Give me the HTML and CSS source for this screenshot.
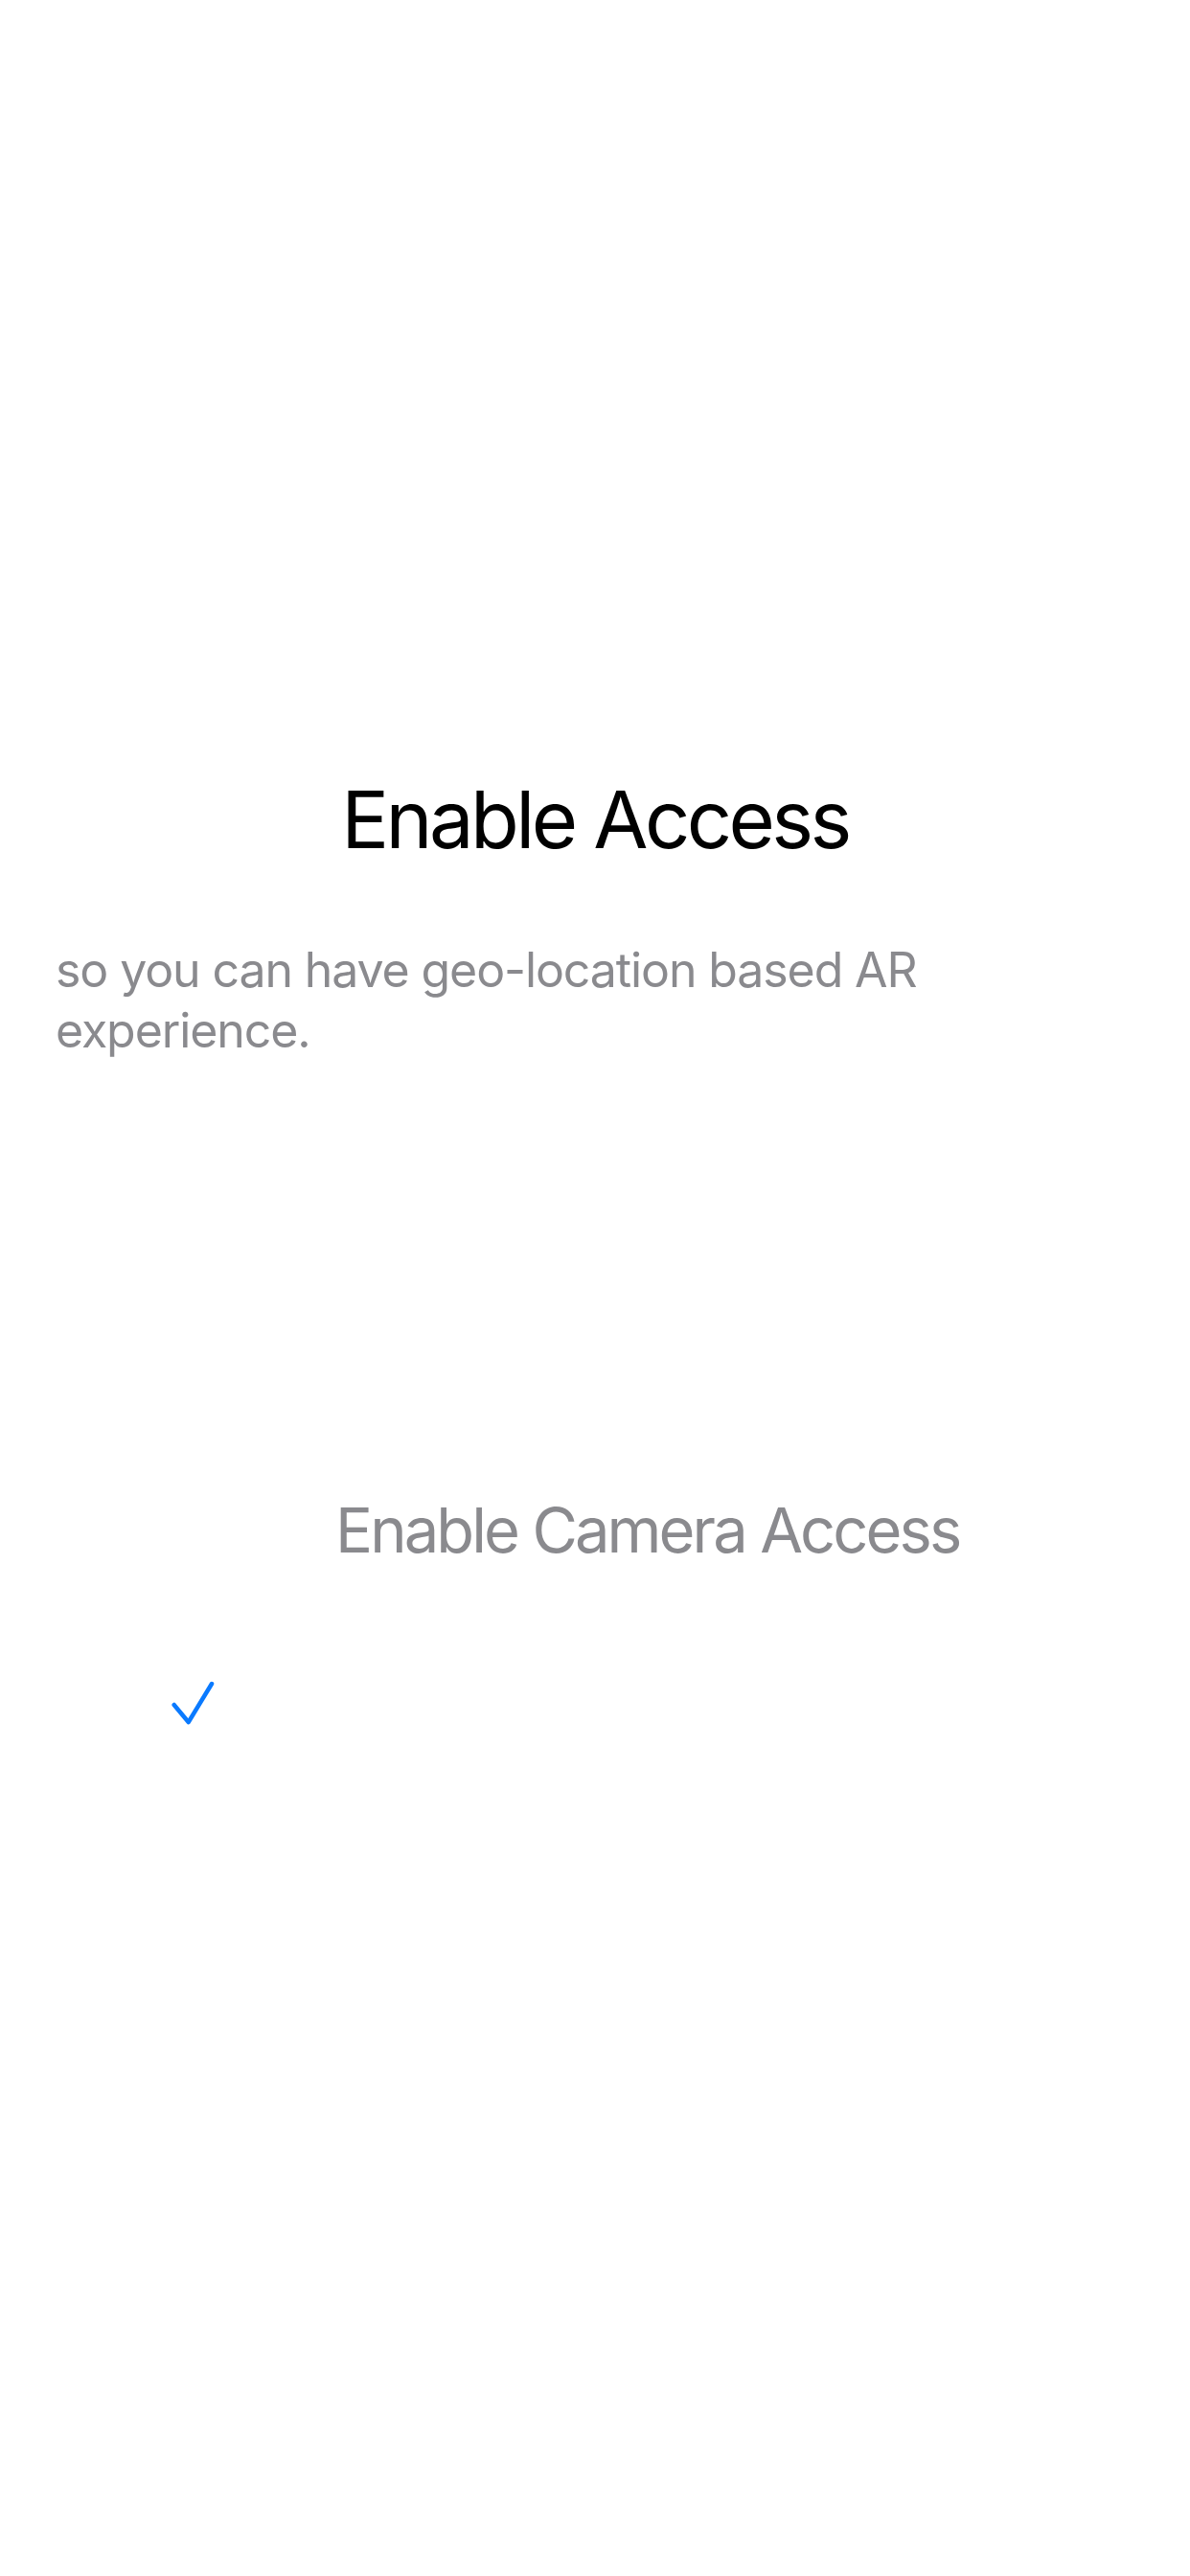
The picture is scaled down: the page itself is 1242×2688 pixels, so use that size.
FILE: index.html
```html
<!DOCTYPE html>
<html lang="en">
<head>
<meta charset="utf-8">
<title>Enable Access</title>
<link rel="stylesheet" href="styles.css">
</head>
<body>
<main class="screen">
  <h1 class="title">Enable Access</h1>
  <p class="subtitle">so you can have geo-location based AR experience.</p>
  <div class="action">Enable Camera Access</div>
  <div class="check-row">
    <svg class="check" width="50" height="50" viewBox="0 0 50 50" aria-hidden="true">
      <path d="M5.7 27 L20.7 45 L45 5" fill="none" stroke="#0A7AFF" stroke-width="4.5" stroke-linecap="round" stroke-linejoin="round"/>
    </svg>
  </div>
</main>
</body>
</html>
```

FILE: styles.css
```css
html, body {
  margin: 0;
  padding: 0;
  background: #ffffff;
}

body {
  width: 1242px;
  height: 2688px;
  overflow: hidden;
  font-family: "Inter", "Liberation Sans", sans-serif;
}

.screen {
  display: flex;
  flex-direction: column;
  padding-top: 805px;
}

.title {
  margin: 0;
  font-size: 83px;
  line-height: 100px;
  font-weight: 400;
  color: #000000;
  text-align: center;
  letter-spacing: -3.6px;
}

.subtitle {
  margin: 76px 0 0;
  padding: 0 58px;
  font-size: 50px;
  line-height: 63px;
  font-weight: 400;
  color: #8a8a8e;
  letter-spacing: -1.1px;
}

.action {
  margin-top: 450px;
  padding-left: 350px;
  font-size: 65px;
  line-height: 80px;
  color: #8a8a8e;
  letter-spacing: -2.9px;
}

.check-row {
  display: flex;
  margin-top: 115px;
  padding-left: 176px;
}

.check {
  display: block;
}
```
